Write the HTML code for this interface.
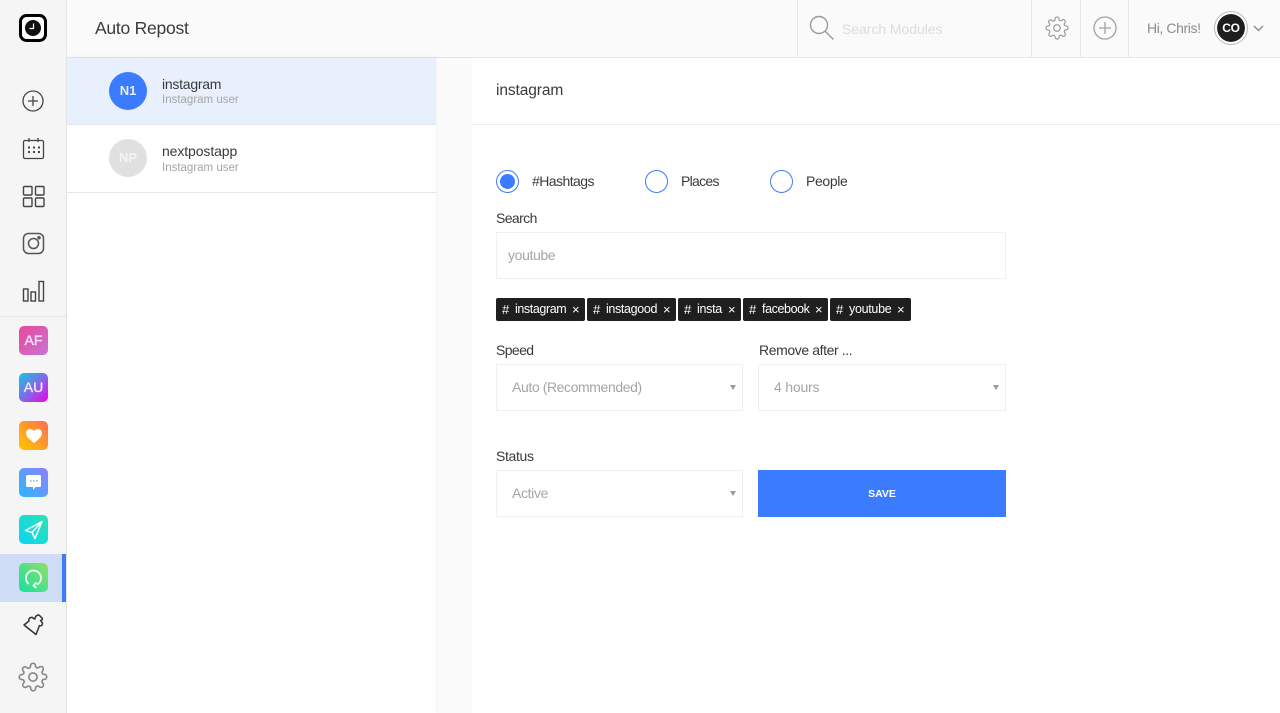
<!DOCTYPE html>
<html><head><meta charset="utf-8"><style>
*{box-sizing:border-box}
html,body{margin:0;padding:0;width:1280px;height:713px;overflow:hidden;background:#fff;font-family:"Liberation Sans",sans-serif;color:#3a3a3a}
div,span.a{position:absolute;white-space:nowrap}
svg{position:absolute;overflow:visible}
.t{line-height:16px;font-size:14px;letter-spacing:-.35px}
.sel,.inp{background:#fff;border:1px solid #f0f0f0;height:47px}
.g{color:#a5a5a5}
.tag{background:#1f1f1f;color:#fff;height:23px;top:298px;border-radius:2px;font-size:12.5px;line-height:23px;letter-spacing:-.3px}
.tag span{position:absolute;top:0}
.tag .h{font-size:13px}
.ic{width:29px;height:29px;left:19px;border-radius:5px;color:#f4e8ff;font-size:14px;text-align:center;line-height:29px;-webkit-text-stroke:.35px #f4e8ff}
.arr{width:0;height:0;border-left:3px solid transparent;border-right:3px solid transparent;border-top:5px solid #999}
</style></head><body>
<!-- sidebar -->
<div style="left:0;top:0;width:67px;height:713px;background:#f5f5f5;border-right:1px solid #e6e6e6"></div>
<div style="left:0;top:316px;width:66px;height:1px;background:#e4e4e4"></div>
<div style="left:0;top:554px;width:66px;height:48px;background:#cfdcf6"></div>
<div style="left:62px;top:554px;width:4px;height:48px;background:#3b7cff"></div>
<svg width="30" height="30" style="left:18px;top:14px"><rect x="2.500" y="1.500" width="25" height="25" rx="6" fill="#fff" stroke="#000" stroke-width="3"/><circle cx="15" cy="14" r="8" fill="#111"/><path d="M15.500 9.500v5h-4" stroke="#fff" stroke-width="1.200" fill="none"/></svg>
<svg width="24" height="24" style="left:22px;top:89px" fill="none" stroke="#444" stroke-width="1.300"><circle cx="11" cy="12" r="10"/><path d="M11 7v10M6 12h10"/></svg>
<svg width="24" height="24" style="left:22px;top:137px" fill="none" stroke="#444" stroke-width="1.300"><rect x="1.500" y="3.500" width="20" height="18" rx="1.500"/><path d="M7 1v4M16 1v4"/><g stroke-width="2" stroke-dasharray="2 3"><path d="M6 10.500h12M6 15h12"/></g></svg>
<svg width="24" height="24" style="left:22px;top:185px" fill="none" stroke="#444" stroke-width="1.400"><rect x="1.500" y="1.500" width="8.500" height="8.500" rx="1"/><rect x="13.500" y="1.500" width="8.500" height="8.500" rx="1"/><rect x="1.500" y="13" width="8.500" height="8.500" rx="1"/><rect x="13.500" y="13" width="8.500" height="8.500" rx="1"/></svg>
<svg width="24" height="24" style="left:22px;top:232px" fill="none" stroke="#555" stroke-width="1.500"><rect x="1.500" y="1.500" width="20" height="20" rx="5"/><circle cx="11.500" cy="11.500" r="5"/><circle cx="17" cy="5.800" r="1" fill="#555"/></svg>
<svg width="24" height="24" style="left:22px;top:280px" fill="none" stroke="#444" stroke-width="1.400"><rect x="1.500" y="9" width="4.500" height="12"/><rect x="9" y="12" width="4.500" height="9"/><rect x="17" y="1.500" width="4.500" height="19.500"/></svg>
<div class="ic" style="top:326px;background:linear-gradient(135deg,#e8489a,#c774d4)">AF</div>
<div class="ic" style="top:373px;background:linear-gradient(135deg,#12c8e0,#8a62e8 55%,#ee00e8)">AU</div>
<div class="ic" style="top:421px;background:linear-gradient(45deg,#ffc800,#ff6f50)"><svg width="16" height="14" viewBox="0 0 16 14" style="left:6.500px;top:8px"><path d="M8 14C3 10 0 7.500 0 4.200 0 1.800 1.800 0 4.100 0 5.700 0 7.200.8 8 2.200 8.800.8 10.300 0 11.900 0 14.200 0 16 1.800 16 4.200 16 7.500 13 10 8 14Z" fill="#fff"/></svg></div>
<div class="ic" style="top:468px;background:linear-gradient(45deg,#2ab8ff,#8f80ff)"><svg width="17" height="17" style="left:7px;top:7px"><path d="M1.500 0h12a1.500 1.500 0 0 1 1.500 1.500v9a1.500 1.500 0 0 1-1.500 1.500H9.500L7 15V12H1.500A1.500 1.500 0 0 1 0 10.500v-9A1.500 1.500 0 0 1 1.500 0Z" fill="#fff"/><path d="M4 6h8" stroke="#7ab0ff" stroke-width="1.500" stroke-dasharray="1.500 1.500"/></svg></div>
<div class="ic" style="top:515px;background:linear-gradient(45deg,#0ad4f5,#2de3b0)"><svg width="20" height="20" style="left:5px;top:5px" fill="none" stroke="#fff" stroke-width="1.500" stroke-linejoin="round"><path d="M18 1.500L1.500 10.500 8 12.500 11 18.500Z"/><path d="M18 1.500L8 12.500"/></svg></div>
<div class="ic" style="top:563px;background:linear-gradient(45deg,#16e0a0,#8fe068)"><svg width="20" height="20" style="left:5px;top:4.500px" fill="none" stroke="#fff" stroke-width="1.700"><path d="M5 16A7.500 7.500 0 1 1 13 16.600"/><path d="M12.500 14.500l-3 3 3 2.500"/></svg></div>
<svg width="21" height="22" style="left:23px;top:614px" fill="none" stroke="#333" stroke-width="1.500" stroke-linejoin="round"><path d="M1 11L6 7C5 4 9 2 10.500 4.500L12 5C12 2 15 0 16.500 1.500L19 4C20 5 19 6.500 17.500 6.500C19 8 20.500 10 18.500 11.500C17.500 12 17 12 16.500 11.500L13 20.500Z"/></svg>
<svg width="30" height="30" viewBox="0 0 24 24" style="left:18px;top:662px" fill="none" stroke="#888" stroke-width="1.300" stroke-linejoin="round"><circle cx="12" cy="12" r="3.300"/><path d="M19.400 15a1.650 1.650 0 0 0 .33 1.820l.06.06a2 2 0 1 1-2.830 2.830l-.06-.06a1.650 1.650 0 0 0-2.800 1.170V21a2 2 0 1 1-4 0v-.09A1.650 1.650 0 0 0 7.300 19.700l-.06.06a2 2 0 1 1-2.830-2.830l.06-.06a1.650 1.650 0 0 0-1.170-2.800H3a2 2 0 1 1 0-4h.09A1.650 1.650 0 0 0 4.300 7.300l-.06-.06a2 2 0 1 1 2.830-2.830l.06.06A1.650 1.650 0 0 0 10 3.300V3a2 2 0 1 1 4 0v.09a1.650 1.650 0 0 0 2.800 1.170l.06-.06a2 2 0 1 1 2.830 2.830l-.06.06a1.650 1.650 0 0 0 1.170 2.800H21a2 2 0 1 1 0 4h-.09A1.650 1.650 0 0 0 19.400 15Z"/></svg>
<!-- header -->
<div style="left:67px;top:0;width:1213px;height:58px;background:#fafafa;border-bottom:1px solid #e6e6e6"></div>
<div class="t" style="left:95px;top:20px;font-size:17.500px;letter-spacing:-.25px">Auto Repost</div>
<div style="left:797px;top:0;width:1px;height:57px;background:#e6e6e6"></div>
<div style="left:1031px;top:0;width:1px;height:57px;background:#e6e6e6"></div>
<div style="left:1080px;top:0;width:1px;height:57px;background:#e6e6e6"></div>
<div style="left:1128px;top:0;width:1px;height:57px;background:#e6e6e6"></div>
<svg width="26" height="26" style="left:809px;top:15px" fill="none" stroke="#a09a94" stroke-width="1.400"><circle cx="10" cy="10" r="8.500"/><path d="M16 16l8.500 8.500"/></svg>
<div class="t" style="left:842px;top:21px;color:#dcdcdc;letter-spacing:-.05px;font-size:14px">Search Modules</div>
<svg width="24" height="24" viewBox="0 0 24 24" style="left:1045px;top:16px" fill="none" stroke="#9a9a9a" stroke-width="1.200"><circle cx="12" cy="12" r="3.300"/><path d="M19.400 15a1.650 1.650 0 0 0 .33 1.820l.06.06a2 2 0 1 1-2.830 2.830l-.06-.06a1.650 1.650 0 0 0-2.800 1.170V21a2 2 0 1 1-4 0v-.09A1.650 1.650 0 0 0 7.300 19.700l-.06.06a2 2 0 1 1-2.830-2.830l.06-.06a1.650 1.650 0 0 0-1.170-2.800H3a2 2 0 1 1 0-4h.09A1.650 1.650 0 0 0 4.300 7.300l-.06-.06a2 2 0 1 1 2.830-2.830l.06.06A1.650 1.650 0 0 0 10 3.300V3a2 2 0 1 1 4 0v.09a1.650 1.650 0 0 0 2.800 1.170l.06-.06a2 2 0 1 1 2.830 2.830l-.06.06a1.650 1.650 0 0 0 1.170 2.800H21a2 2 0 1 1 0 4h-.09A1.650 1.650 0 0 0 19.400 15Z"/></svg>
<svg width="24" height="24" style="left:1093px;top:16px" fill="none" stroke="#a0a0a0" stroke-width="1.300"><circle cx="12" cy="12" r="11"/><path d="M12 6v12M6 12h12"/></svg>
<div class="t" style="left:1147px;top:20px;color:#8c8c8c;font-size:14px;letter-spacing:-.4px">Hi, Chris!</div>
<div style="left:1215px;top:12px;width:32px;height:32px;border-radius:50%;background:#1e1e1e;border:2px solid #fafafa;box-shadow:0 0 0 1px #bbb;background-clip:padding-box;color:#fff;font-size:12px;font-weight:bold;text-align:center;line-height:28px;letter-spacing:-.3px">CO</div>
<svg width="12" height="8" style="left:1253px;top:25px" fill="none" stroke="#888" stroke-width="1.300"><path d="M1 1l4.500 4.500L10 1"/></svg>
<!-- account list -->
<div style="left:67px;top:58px;width:369px;height:655px;background:#fff;box-shadow:3px 0 6px rgba(0,0,0,.06)"></div>
<div style="left:437px;top:58px;width:35px;height:655px;background:#fafafa"></div>
<div style="left:67px;top:58px;width:369px;height:67px;background:#e8f0fe;border-bottom:1px solid #e4e6ea"></div>
<div style="left:67px;top:125px;width:369px;height:68px;background:#fff;border-bottom:1px solid #e6e6e6"></div>
<div style="left:109px;top:72px;width:38px;height:38px;border-radius:50%;background:#3b7cff;color:#e8f0ff;text-align:center;line-height:38px;font-size:13px;font-weight:bold">N1</div>
<div style="left:109px;top:139px;width:38px;height:38px;border-radius:50%;background:#e0e0e0;color:#f3f3f3;text-align:center;line-height:38px;font-size:13px;font-weight:bold">NP</div>
<div class="t" style="left:162px;top:76px;letter-spacing:-.25px">instagram</div>
<div class="t g" style="left:162px;top:92px;font-size:11.500px;letter-spacing:0">Instagram user</div>
<div class="t" style="left:162px;top:143px;letter-spacing:-.1px">nextpostapp</div>
<div class="t g" style="left:162px;top:160px;font-size:11.500px;letter-spacing:0">Instagram user</div>
<!-- main -->
<div style="left:472px;top:124px;width:808px;height:1px;background:#ececec"></div>
<div class="t" style="left:496px;top:83px;font-size:15.500px;letter-spacing:-.1px">instagram</div>
<div style="left:496px;top:170px;width:23px;height:23px;border-radius:50%;border:1.300px solid #3b7cff;background:#fff"></div>
<div style="left:500px;top:174px;width:15px;height:15px;border-radius:50%;background:#3b7cff"></div>
<div style="left:645px;top:170px;width:23px;height:23px;border-radius:50%;border:1.300px solid #3b7cff"></div>
<div style="left:770px;top:170px;width:23px;height:23px;border-radius:50%;border:1.300px solid #3b7cff"></div>
<div class="t" style="left:532px;top:173px;letter-spacing:-.55px">#Hashtags</div>
<div class="t" style="left:681px;top:173px;letter-spacing:-.7px">Places</div>
<div class="t" style="left:806px;top:173px;letter-spacing:-.35px">People</div>
<div class="t" style="left:496px;top:210px;letter-spacing:-.6px">Search</div>
<div class="inp" style="left:496px;top:232px;width:510px"></div>
<div class="t g" style="left:508px;top:247px">youtube</div>
<div class="tag" style="left:496px;width:89px"><span class="h" style="left:6px">#</span><span style="left:19px;letter-spacing:-.4px">instagram</span><span style="left:76px;font-size:13px">×</span></div>
<div class="tag" style="left:587px;width:89px"><span class="h" style="left:6px">#</span><span style="left:19px;letter-spacing:-.35px">instagood</span><span style="left:76px;font-size:13px">×</span></div>
<div class="tag" style="left:678px;width:63px"><span class="h" style="left:6px">#</span><span style="left:19px">insta</span><span style="left:50px;font-size:13px">×</span></div>
<div class="tag" style="left:743px;width:85px"><span class="h" style="left:6px">#</span><span style="left:19px;letter-spacing:-.4px">facebook</span><span style="left:72px;font-size:13px">×</span></div>
<div class="tag" style="left:830px;width:81px"><span class="h" style="left:6px">#</span><span style="left:19px;letter-spacing:-.3px">youtube</span><span style="left:67px;font-size:13px">×</span></div>
<div class="t" style="left:496px;top:342px;letter-spacing:-.6px">Speed</div>
<div class="t" style="left:759px;top:342px;letter-spacing:-.4px">Remove after ...</div>
<div class="sel" style="left:496px;top:364px;width:247px"></div>
<div class="sel" style="left:758px;top:364px;width:248px"></div>
<div class="t g" style="left:512px;top:379px;letter-spacing:-.4px">Auto (Recommended)</div>
<div class="t g" style="left:774px;top:379px;letter-spacing:-.2px">4 hours</div>
<div class="arr" style="left:730px;top:385px"></div>
<div class="arr" style="left:993px;top:385px"></div>
<div class="t" style="left:496px;top:448px">Status</div>
<div class="sel" style="left:496px;top:470px;width:247px"></div>
<div class="t g" style="left:512px;top:485px">Active</div>
<div class="arr" style="left:730px;top:491px"></div>
<div style="left:758px;top:470px;width:248px;height:47px;background:#3b7cff;color:#fff;font-size:10.500px;font-weight:bold;text-align:center;line-height:47px;padding-top:1px">SAVE</div>
</body></html>
